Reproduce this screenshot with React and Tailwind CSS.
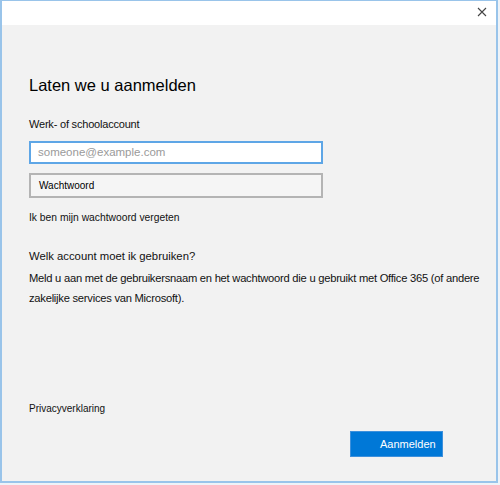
import React from "react";

export default function App() {
  return (
    <div className="w-[500px] h-[485px] bg-[#eef3f8] overflow-hidden" style={{ fontFamily: '"Liberation Sans", Arial, sans-serif' }}>
      <div className="w-[498px] h-[483px] border-t border-l-2 border-r-2 border-b-2 border-[#99c4ea] flex flex-col bg-[#f2f2f2]">
        <div className="h-[24px] bg-white flex justify-end items-center pr-[9px] shrink-0">
          <svg width="10" height="10" viewBox="0 0 10 10" className="mb-[2px]">
            <path d="M1 1 L9 9 M9 1 L1 9" stroke="#444" strokeWidth="1.1" />
          </svg>
        </div>
        <div className="flex flex-col flex-1 pl-[27px] pr-[4px]">
          <h1 className="mt-[48px] text-[16.5px] leading-[24px] text-black font-normal">Laten we u aanmelden</h1>
          <div className="mt-[19px] text-[11px] leading-[16px] text-[#111] tracking-[-0.2px]">Werk- of schoolaccount</div>
          <div className="mt-[9px] w-[294px] h-[23px] border-2 border-[#5ea6e6] bg-white flex items-center pl-[7px] text-[11.5px] text-[#9a9a9a]">
            someone@example.com
          </div>
          <div className="mt-[9px] w-[294px] h-[25px] border-2 border-[#b4b4b4] bg-[#f5f5f5] flex items-center pl-[8px] text-[10px] text-black">
            Wachtwoord
          </div>
          <div className="mt-[12px] text-[10.3px] leading-[16px] text-[#111]">Ik ben mijn wachtwoord vergeten</div>
          <div className="mt-[21px] text-[11.3px] leading-[18px] text-[#111]">Welk account moet ik gebruiken?</div>
          <div className="mt-[3px] text-[11.2px] leading-[20px] text-[#111] tracking-[-0.25px]">
            Meld u aan met de gebruikersnaam en het wachtwoord die u gebruikt met Office 365 (of andere zakelijke services van Microsoft).
          </div>
          <div className="mt-[93px] text-[10px] leading-[16px] text-[#111]">Privacyverklaring</div>
          <div className="mt-[14px] flex justify-end pr-[49px]">
            <button className="w-[93px] h-[26px] bg-[#0078d7] border border-[#3d90dc] text-white text-[11px] pl-[29px] text-left">
              Aanmelden
            </button>
          </div>
        </div>
      </div>
    </div>
  );
}
